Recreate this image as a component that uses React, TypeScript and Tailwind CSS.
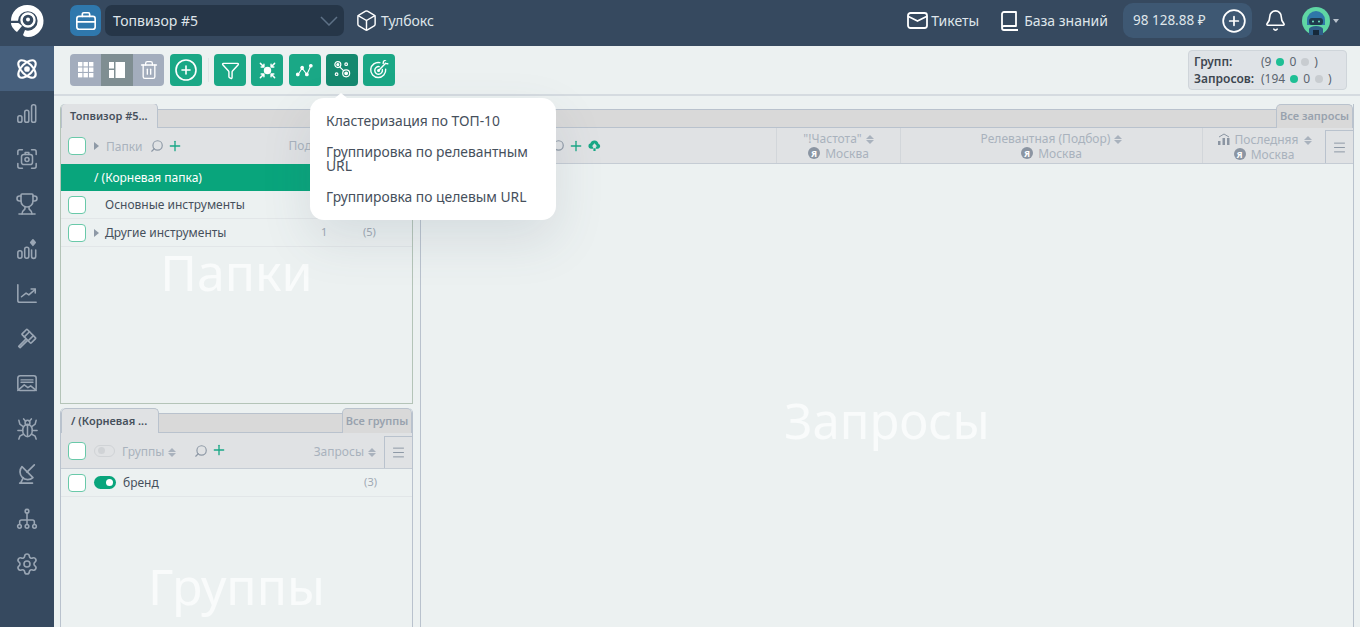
import React from "react";
import { Trash2, CirclePlus, Funnel, Bell, Box, Search, Plus, Menu, Settings, Trophy } from "lucide-react";

const S = (p: React.SVGProps<SVGSVGElement>) => (
  <svg viewBox="0 0 24 24" fill="none" stroke="currentColor" strokeWidth="1.8" strokeLinecap="round" strokeLinejoin="round" {...p} />
);

const Atom = () => (
  <S className="w-[24px] h-[24px]" strokeWidth="2.1">
    <ellipse cx="12" cy="12" rx="11" ry="5.5" transform="rotate(45 12 12)" />
    <ellipse cx="12" cy="12" rx="11" ry="5.5" transform="rotate(-45 12 12)" />
    <circle cx="12" cy="12" r="1.8" fill="currentColor" />
  </S>
);
const Bars = () => (
  <S className="w-[22px] h-[22px]" strokeWidth="1.7">
    <rect x="2" y="14" width="4.5" height="7" rx="2" />
    <rect x="9.5" y="8" width="4.5" height="13" rx="2" />
    <rect x="17" y="2" width="4.5" height="19" rx="2" />
  </S>
);
const Cam = () => (
  <S className="w-[22px] h-[22px]" strokeWidth="1.7">
    <path d="M2 7V4a2 2 0 0 1 2-2h3M17 2h3a2 2 0 0 1 2 2v3M22 17v3a2 2 0 0 1-2 2h-3M7 22H4a2 2 0 0 1-2-2v-3" />
    <rect x="6" y="7" width="12" height="11" rx="2.5" />
    <circle cx="12" cy="12.5" r="2.2" />
    <path d="M10 7V5h4v2" />
  </S>
);
const BarsStar = () => (
  <S className="w-[22px] h-[22px]" strokeWidth="1.7">
    <rect x="2" y="14" width="4.5" height="8" rx="2" />
    <rect x="9.5" y="10" width="4.5" height="12" rx="2" />
    <path d="M17 13v7a2 2 0 0 0 4.5 0v-7" />
    <path d="M18.5 2l2.5 3-2.5 3-2.5-3z" fill="currentColor" />
  </S>
);
const Chart = () => (
  <S className="w-[22px] h-[22px]" strokeWidth="1.7">
    <path d="M2 2v17a2 2 0 0 0 2 2h18" />
    <path d="M6 15l5-4 3 2 7-6" />
    <path d="M16.5 6.5H21V11" />
  </S>
);
const Hammer = () => (
  <S className="w-[22px] h-[22px]" strokeWidth="1.8">
    <g transform="rotate(45 14 9)">
      <rect x="7" y="5" width="14" height="8" rx="1" />
      <path d="M11 5v8M17 5v8" />
    </g>
    <path d="M10.5 12.5L3 20l1.5 1.5 7.5-7.5" />
  </S>
);
const Ads = () => (
  <S className="w-[22px] h-[22px]" strokeWidth="1.7">
    <rect x="2" y="3" width="20" height="16" rx="2.5" />
    <path d="M5.5 7.5h13M5.5 10h13" strokeWidth="1.6" />
    <path d="M2 19l7-6 4 3 3-2 6 5" />
  </S>
);
const Spider = () => (
  <S className="w-[23px] h-[23px]" strokeWidth="1.6">
    <ellipse cx="12" cy="14" rx="5" ry="6.5" />
    <circle cx="12" cy="6" r="2.5" />
    <path d="M12 9v11M8 2l2 2.5M16 2l-2 2.5M7.5 10L4 7.5 3 3.5M16.5 10L20 7.5 21 3.5M7 14H2M17 14h5M7.5 18L4 20l-1 3M16.5 18l3.5 2 1 3" />
  </S>
);
const Dish = () => (
  <S className="w-[22px] h-[22px]" strokeWidth="1.8">
    <path d="M6.500 4a8.500 8.500 0 0 0 12 12z" />
    <path d="M12 10l8-8" />
    <path d="M4 22h14M8 16l-3 6" />
  </S>
);
const Tree = () => (
  <S className="w-[22px] h-[22px]" strokeWidth="1.7">
    <circle cx="12" cy="3.5" r="2" />
    <path d="M12 5.5V13M4 18v-3a2 2 0 0 1 2-2h12a2 2 0 0 1 2 2v3M12 13v5" />
    <circle cx="3.8" cy="20" r="2" />
    <circle cx="12" cy="20" r="2" />
    <circle cx="20.2" cy="20" r="2" />
  </S>
);
const Logo = () => (
  <svg viewBox="0 0 34 34" className="w-[34px] h-[34px]">
    <path d="M17 1a16 16 0 0 1 1 32c-3 0-4-1-5-2l2-5c1 .5 2 .8 3 .8a9.800 9.800 0 1 0-10-10H1A16 16 0 0 1 17 1z" fill="#fff" />
    <path d="M1 19h7c1 0 3 2 4 3l-5 6c-3-2-6-6-6-9z" fill="#fff" />
    <circle cx="18" cy="16" r="6.500" fill="none" stroke="#fff" strokeWidth="2.400" />
    <circle cx="18" cy="15.500" r="2" fill="#fff" />
  </svg>
);
const Robot = () => (
  <svg viewBox="0 0 28 28" className="w-[28px] h-[28px]">
    <circle cx="14" cy="14" r="14" fill="#5fd6a4" />
    <path d="M5 13a9 9 0 0 1 18 0v5H5z" fill="#2f77a8" />
    <rect x="7" y="11" width="14" height="7" rx="3" fill="#1f3a4d" />
    <circle cx="11" cy="14.500" r="1" fill="#6fe3c0" />
    <circle cx="17" cy="14.500" r="1" fill="#6fe3c0" />
    <path d="M7 28v-6a7 3 0 0 1 14 0v6z" fill="#2f5f88" />
    <rect x="11" y="23" width="6" height="5" fill="#16293a" />
  </svg>
);
const GridOne = () => (
  <svg viewBox="0 0 16 16" className="w-[16px] h-[16px]" fill="#fff">
    {[0, 5.5, 11].map((y) => [0, 5.5, 11].map((x) => <rect key={`${x}-${y}`} x={x} y={y} width="4.4" height="4.4" />))}
  </svg>
);
const Layout2 = () => (
  <svg viewBox="0 0 16 16" className="w-[16px] h-[16px]" fill="#fff">
    <rect x="0" y="0" width="5" height="6.5" />
    <rect x="0" y="8" width="5" height="8" />
    <rect x="6.5" y="0" width="9.5" height="16" />
  </svg>
);
const Collapse = () => (
  <S className="w-[19px] h-[19px]" strokeWidth="1.8">
    <circle cx="12" cy="12" r="3.8" fill="currentColor" />
    <path d="M3 3l4.500 4.500M7.500 4v3.500H4M21 3l-4.500 4.500M16.500 4v3.500H20M3 21l4.500-4.500M7.500 20v-3.500H4M21 21l-4.500-4.500M16.500 20v-3.500H20" />
  </S>
);
const Nodes = () => (
  <S className="w-[19px] h-[19px]" strokeWidth="1.3">
    <path d="M4 17l5-8 6 8 5-11" />
    <circle cx="3.5" cy="17" r="1.7" fill="currentColor" />
    <circle cx="9" cy="8.5" r="1.7" fill="currentColor" />
    <circle cx="15" cy="17" r="1.7" fill="currentColor" />
    <circle cx="20" cy="6" r="1.7" fill="currentColor" />
  </S>
);
const Cluster = () => (
  <S className="w-[20px] h-[20px]" strokeWidth="1.4">
    <circle cx="7" cy="5.5" r="3.6" />
    <circle cx="7" cy="5.5" r="1.2" fill="currentColor" />
    <circle cx="17" cy="16" r="4.2" />
    <circle cx="17" cy="16" r="1.6" fill="currentColor" />
    <circle cx="17" cy="5" r="1.6" />
    <circle cx="5.5" cy="17" r="1.6" />
    <path d="M9.5 8.5l4 4" />
  </S>
);
const Dart = () => (
  <S className="w-[20px] h-[20px]" strokeWidth="1.7">
    <path d="M20 11a9 9 0 1 1-7-7.8" />
    <path d="M16 11.5a4.6 4.6 0 1 1-3.8-3.6" />
    <path d="M11.5 12.5L20 4M17 4l.5-2.500L20 0M20 4l2.500.5" />
    <circle cx="11.5" cy="12.5" r="1" fill="currentColor" />
  </S>
);
const Sort = () => (
  <span className="inline-flex flex-col gap-[1px] ml-[4px] align-middle">
    <span className="block w-0 h-0 border-x-[4px] border-x-transparent border-b-[4px] border-b-[#a9b2bd]" />
    <span className="block w-0 h-0 border-x-[4px] border-x-transparent border-t-[4px] border-t-[#a9b2bd]" />
  </span>
);
const Check = () => <span className="w-[18px] h-[18px] shrink-0 rounded-[4px] border-[1.5px] border-[#69c9a9] bg-white" />;
const Caret = () => (
  <span className="block w-0 h-0 border-y-[4px] border-y-transparent border-l-[5px] border-l-[#8e99a6]" />
);
const Ya = () => (
  <span className="inline-flex items-center justify-center w-[12px] h-[12px] rounded-full bg-[#8b95a2] text-white text-[9px] font-bold leading-none mr-[5px]">Я</span>
);
const GreenBtn = ({ children, dark }: { children: React.ReactNode; dark?: boolean }) => (
  <div className={`w-[32px] h-[32px] rounded-[4px] flex items-center justify-center text-white ${dark ? "bg-[#15896f]" : "bg-[#1aa886]"}`}>{children}</div>
);
const Dot = ({ c }: { c: string }) => <span className={`w-[8px] h-[8px] rounded-full ${c}`} />;
const Tab = ({ children, w }: { children: React.ReactNode; w: string }) => (
  <div className={`${w} h-[25px] shrink-0 rounded-t-[5px] border border-b-0 border-[#b9c2cd] bg-[#e0e2e4] flex items-center font-semibold text-[11px] text-[#46505c]`}>{children}</div>
);

const lu = "w-[24px] h-[24px]";
const sideIcons = [
  <Bars />,
  <Cam />,
  <Trophy className={lu} strokeWidth={1.6} />,
  <BarsStar />,
  <Chart />,
  <Hammer />,
  <Ads />,
  <Spider />,
  <Dish />,
  <Tree />,
  <Settings className={lu} strokeWidth={1.6} />,
];

export default function App() {
  return (
    <div className="relative w-[1360px] h-[627px] overflow-hidden flex flex-col bg-[#ecf1f1] text-[#46505c] font-['Noto_Sans','Open_Sans',sans-serif]">
      {/* header */}
      <header className="h-[46px] shrink-0 bg-[#36495f] flex items-center pb-[5px] text-white">
        <div className="w-[54px] flex justify-center shrink-0"><Logo /></div>
        <div className="ml-[16px] w-[31px] h-[31px] rounded-[7px] bg-[#2f78ad] flex items-center justify-center">
          <S className="w-[22px] h-[22px]" strokeWidth="1.8">
            <rect x="2" y="7" width="20" height="14" rx="2.5" />
            <path d="M8 7V4.500A1.500 1.500 0 0 1 9.500 3h5A1.500 1.500 0 0 1 16 4.500V7M2 13h20" />
          </S>
        </div>
        <div className="ml-[4px] w-[239px] h-[31px] rounded-[7px] bg-[#263648] flex items-center justify-between pl-[8px] pr-[6px] text-[14px] text-[#dfe5ea]">
          <span>Топвизор #5</span>
          <svg viewBox="0 0 18 10" className="w-[18px] h-[10px]" fill="none" stroke="#5e7186" strokeWidth="1.5"><path d="M1 1l8 8 8-8" /></svg>
        </div>
        <Box className="ml-[11px] w-[23px] h-[23px]" strokeWidth={1.5} />
        <span className="ml-[3px] text-[14px] text-[#dfe5ea]">Тулбокс</span>
        <div className="ml-auto flex items-center">
          <S className="w-[21px] h-[17px]" viewBox="0 0 21 17" strokeWidth="1.8">
            <rect x="1" y="1" width="19" height="15" rx="2.5" />
            <path d="M1.500 4.500l9 4.500 9-4.500" />
          </S>
          <span className="ml-[3px] text-[14px] text-[#dfe5ea]">Тикеты</span>
          <svg viewBox="0 0 18 20" className="ml-[21px] w-[18px] h-[20px]" fill="none" stroke="#fff" strokeWidth="1.8" strokeLinejoin="round">
            <path d="M2 17V3a2 2 0 0 1 2-2h12v14H4a2 2 0 0 0-2 2 2 2 0 0 0 2 2h14" />
          </svg>
          <span className="ml-[6px] text-[14px] text-[#dfe5ea]">База знаний</span>
          <div className="ml-[15px] w-[129px] h-[35px] rounded-[10px] bg-[#3e5873] flex items-center pl-[10px] pr-[5px] justify-between">
            <span className="text-[13.5px] text-[#dfe5ea]">98 128.88 ₽</span>
            <CirclePlus className="w-[26px] h-[26px]" strokeWidth={1.6} />
          </div>
          <Bell className="ml-[12px] w-[23px] h-[23px]" strokeWidth={1.7} />
          <div className="ml-[15px]"><Robot /></div>
          <span className="ml-[3px] mr-[21px] w-0 h-0 border-x-[3.5px] border-x-transparent border-t-[4px] border-t-[#b9c2cd]" />
        </div>
      </header>

      <div className="flex-1 flex min-h-0">
        {/* sidebar */}
        <aside className="w-[54px] shrink-0 bg-[#36495f] flex flex-col items-center">
          <div className="w-full h-[45px] bg-[#465f7c] flex items-center justify-center text-white"><Atom /></div>
          <div className="flex flex-col items-center text-[#9aa6b4]">
            {sideIcons.map((ic, i) => (
              <div key={i} className="h-[45px] w-[54px] flex items-center justify-center">{ic}</div>
            ))}
          </div>
        </aside>

        <main className="flex-1 min-w-0 flex flex-col">
          {/* toolbar */}
          <div className="h-[50px] shrink-0 border-b-2 border-[#d5dbe0] flex items-center pl-[16px] pr-[13px]">
            <div className="flex h-[32px] rounded-[4px] overflow-hidden bg-[#a3adbd] text-white">
              <div className="w-[31px] flex items-center justify-center"><GridOne /></div>
              <div className="w-[32px] flex items-center justify-center bg-[#7f8e92]"><Layout2 /></div>
              <div className="w-[31px] flex items-center justify-center"><Trash2 className="w-[20px] h-[20px]" strokeWidth={1.6} /></div>
            </div>
            <div className="ml-[6px]"><GreenBtn><CirclePlus className="w-[24px] h-[24px]" strokeWidth={1.6} /></GreenBtn></div>
            <div className="ml-[6px] w-px h-[24px] bg-[#dfe4e6]" />
            <div className="ml-[5px] flex gap-[5.3px]">
              <GreenBtn><Funnel className="w-[19px] h-[19px]" strokeWidth={1.8} /></GreenBtn>
              <GreenBtn><Collapse /></GreenBtn>
              <GreenBtn><Nodes /></GreenBtn>
              <GreenBtn dark><Cluster /></GreenBtn>
              <GreenBtn><Dart /></GreenBtn>
            </div>
            <div className="ml-auto w-[159px] h-[40px] rounded-[4px] border border-[#cfd5da] bg-[#dfe3e7] px-[5px] pt-[3px] text-[12px] leading-[16.5px]">
              <div className="flex items-center">
                <span className="w-[67px] font-semibold text-[#3d4650]">Групп:</span>
                <span className="flex items-center gap-[5px] text-[#5b6570]">(9 <Dot c="bg-[#1fbf95]" /> 0 <Dot c="bg-[#c8ccd0]" /> )</span>
              </div>
              <div className="flex items-center">
                <span className="w-[67px] font-semibold text-[#3d4650]">Запросов:</span>
                <span className="flex items-center gap-[5px] text-[#5b6570]">(194 <Dot c="bg-[#1fbf95]" /> 0 <Dot c="bg-[#c8ccd0]" /> )</span>
              </div>
            </div>
          </div>

          {/* content */}
          <div className="flex-1 min-h-0 flex pl-[6px] pr-[6px] pt-[8px] gap-[7px]">
            {/* left column */}
            <div className="w-[353px] shrink-0 flex flex-col gap-[4px]">
              <section className="relative h-[300px] shrink-0 flex flex-col border border-[#b4c4b8] border-t-0 rounded-t-[5px] overflow-hidden">
                <div className="h-[24px] flex items-end bg-[#ecf1f1]">
                  <Tab w="w-[97px]"><span className="pl-[8px]">Топвизор #5...</span></Tab>
                  <div className="flex-1 h-[19px] bg-[#d9d9d9] border-y border-[#b9c2cd]" />
                </div>
                <div className="h-[36px] shrink-0 bg-[#e0e2e4] flex items-center pl-[7px] text-[12px] text-[#a9b2bd]">
                  <Check />
                  <span className="ml-[8px]"><Caret /></span>
                  <span className="ml-[7px] pt-[1px]">Папки</span>
                  <Search className="ml-[7px] w-[14px] h-[14px] -scale-x-100 text-[#8e99a6]" strokeWidth={2} />
                  <Plus className="ml-[3px] w-[16px] h-[16px] text-[#1aa886]" strokeWidth={2} />
                  <span className="ml-[106px]">Подгруппы</span>
                </div>
                <div className="h-[27px] shrink-0 bg-[#09a57c] flex items-center pl-[33px] text-[12px] text-white">/ (Корневая папка)</div>
                <div className="h-[28px] shrink-0 border-b border-[#e2e6e8] flex items-center pl-[7px] text-[12px]">
                  <Check />
                  <span className="ml-[19px]">Основные инструменты</span>
                </div>
                <div className="h-[28px] shrink-0 border-b border-[#e2e6e8] flex items-center pl-[7px] text-[12px]">
                  <Check />
                  <span className="ml-[8px]"><Caret /></span>
                  <span className="ml-[6px] w-[216px]">Другие инструменты</span>
                  <span className="w-[42px] text-[11px] text-[#a0a9b4]">1</span>
                  <span className="text-[11px] text-[#a0a9b4]">(5)</span>
                </div>
                <div className="flex-1 min-h-0 flex justify-center pt-[3px]">
                  <span className="text-[50px] leading-[44px] text-[#f9fbfb]">Папки</span>
                </div>
              </section>

              <section className="flex-1 min-h-0 flex flex-col border border-[#b9c2cd] border-t-0 border-b-0 rounded-t-[5px] overflow-hidden">
                <div className="h-[25px] flex items-end bg-[#ecf1f1] shrink-0">
                  <Tab w="w-[98px]"><span className="pl-[9px]">/ (Корневая ...</span></Tab>
                  <div className="flex-1 h-[20px] bg-[#d9d9d9] border-y border-[#b9c2cd]" />
                  <div className="w-[70px] h-[25px] rounded-t-[5px] border border-b-0 border-[#b9c2cd] bg-[#d9d9d9] flex items-center justify-center text-[11px] font-semibold text-[#98a2ae]">Все группы</div>
                </div>
                <div className="h-[36px] shrink-0 bg-[#e0e2e4] border-b border-[#c5ccd4] flex items-center pl-[7px] text-[12px] text-[#a9b2bd]">
                  <Check />
                  <span className="ml-[8px] w-[21px] h-[12px] rounded-full border border-[#d0d3d6] flex items-center pl-[3px]"><span className="w-[7px] h-[7px] rounded-full bg-[#d0d3d6]" /></span>
                  <span className="ml-[7px] pt-[2px]">Группы</span>
                  <span className="pt-[2px]"><Sort /></span>
                  <Search className="ml-[18px] w-[14px] h-[14px] -scale-x-100 text-[#8e99a6]" strokeWidth={2} />
                  <Plus className="ml-[3px] w-[16px] h-[16px] text-[#1aa886] -translate-y-[1px]" strokeWidth={2} />
                  <span className="ml-auto pt-[2px]">Запросы</span>
                  <span className="pt-[2px]"><Sort /></span>
                  <div className="ml-[8px] self-end w-[28px] h-[32px] border-l border-t border-[#b9c2cd] flex items-center justify-center"><Menu className="w-[15px] h-[15px] text-[#8e99a6]" strokeWidth={1.6} /></div>
                </div>
                <div className="h-[28px] shrink-0 border-b border-[#e2e6e8] flex items-center pl-[7px] text-[12px]">
                  <Check />
                  <span className="ml-[8px] w-[22px] h-[13px] rounded-full bg-[#09a57c] flex items-center justify-end pr-[3px]"><span className="w-[7px] h-[7px] rounded-full bg-white" /></span>
                  <span className="ml-[7px]">бренд</span>
                  <span className="ml-auto mr-[35px] text-[11px] text-[#a0a9b4]">(3)</span>
                </div>
                <div className="flex-1 min-h-0 flex justify-center pt-[65px]">
                  <span className="text-[50px] leading-[48px] text-[#f9fbfb]">Группы</span>
                </div>
              </section>
            </div>

            {/* right panel */}
            <section className="flex-1 min-w-0 flex flex-col border-x border-[#b9c2cd]">
              <div className="h-[24px] shrink-0 flex items-end bg-[#ecf1f1]">
                <div className="flex-1 h-[19px] bg-[#d9d9d9] border-y border-[#b9c2cd]" />
                <div className="w-[77px] h-[24px] rounded-t-[5px] border border-b-0 border-[#b9c2cd] bg-[#d9d9d9] flex items-center justify-center text-[11px] font-semibold text-[#98a2ae]">Все запросы</div>
              </div>
              <div className="h-[36px] shrink-0 bg-[#e0e2e4] border-b border-[#c5ccd4] flex items-center text-[12px] leading-[15px] text-[#a9b2bd]">
                <div className="w-[355px] flex justify-end items-center pr-[175px]">
                  <Search className="w-[14px] h-[14px] -scale-x-100 text-[#8e99a6]" strokeWidth={2} />
                  <Plus className="ml-[3px] w-[16px] h-[16px] text-[#1aa886]" strokeWidth={2} />
                  <svg viewBox="0 0 14 12" className="ml-[4px] w-[13px] h-[11px]" fill="#1aa886"><path d="M3 9.500a3 3 0 0 1-.4-5.900 4.500 4.500 0 0 1 8.700.5A2.800 2.800 0 0 1 11 9.500H8.500V7H10L7 3.500 4 7h1.500v2.500zM5.800 9h2.400v3H5.800z" /></svg>
                </div>
                <div className="w-[125px] h-full border-l border-r border-[#d2d6da] flex flex-col items-center justify-center">
                  <span>"!Частота"<Sort /></span>
                  <span className="flex items-center"><Ya />Москва</span>
                </div>
                <div className="w-[301px] h-full flex flex-col items-center justify-center">
                  <span>Релевантная (Подбор)<Sort /></span>
                  <span className="flex items-center"><Ya />Москва</span>
                </div>
                <div className="flex-1 h-full border-l border-[#d2d6da] flex flex-col items-center justify-center pt-[2px]">
                  <span className="flex items-center translate-x-[1px]"><svg viewBox="0 0 12 12" className="w-[12px] h-[12px] mr-[5px]" fill="#8b95a2"><rect x="0" y="8" width="2.500" height="4" /><rect x="4.500" y="5" width="2.500" height="7" /><rect x="9" y="5" width="2.500" height="7" /><path d="M1 4l5-3 5 3" fill="none" stroke="#8b95a2" /></svg>Последняя<span className="ml-[2px]"><Sort /></span></span>
                  <span className="flex items-center"><Ya />Москва</span>
                </div>
                <div className="w-[28px] self-end h-[33px] border-l border-t border-[#b9c2cd] flex items-center justify-center"><Menu className="w-[15px] h-[15px] text-[#8e99a6]" strokeWidth={1.6} /></div>
              </div>
              <div className="flex-1 min-h-0 flex justify-center pt-[228px]">
                <span className="text-[49px] leading-[56px] text-[#f9fbfb]">Запросы</span>
              </div>
            </section>
          </div>
        </main>
      </div>

      {/* popover */}
      <div className="absolute left-[310px] top-[98px] w-[246px] h-[122px] rounded-[14px] bg-white shadow-[0_20px_50px_rgba(70,85,110,0.13)] px-[16px] pt-[14px] text-[13.85px] leading-[14px] text-[#46505c]">
        <span className="absolute left-[25px] -top-[5px] w-0 h-0 border-x-[6px] border-x-transparent border-b-[5px] border-b-white" />
        <div className="h-[18px] flex items-center">Кластеризация по ТОП-10</div>
        <div className="mt-[15px]">Группировка по релевантным URL</div>
        <div className="mt-[17px]">Группировка по целевым URL</div>
      </div>
    </div>
  );
}
